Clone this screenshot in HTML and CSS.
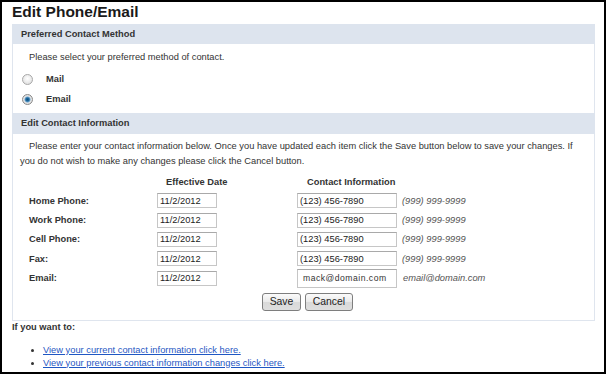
FILE: index.html
```html
<!DOCTYPE html>
<html lang="en">
<head>
    <meta charset="UTF-8">
    <meta name="viewport" content="width=device-width, initial-scale=1.0">
    <title>Edit Phone/Email</title>
    <link rel="stylesheet" href="styles.css">
</head>
<body>
<div class="frame">
    <h1>Edit Phone/Email</h1>

    <div class="panel">
        <div class="panel-head">Preferred Contact Method</div>
        <div class="panel-body method">
            <p class="intro">Please select your preferred method of contact.</p>
            <label class="choice"><input type="radio" name="method" value="mail"> Mail</label>
            <label class="choice"><input type="radio" name="method" value="email" checked> Email</label>
        </div>
        <div class="panel-head second">Edit Contact Information</div>
        <div class="panel-body info">
            <p class="para">Please enter your contact information below. Once you have updated each item click the Save button below to save your changes. If you do not wish to make any changes please click the Cancel button.</p>

            <div class="grid">
                <div></div>
                <div class="col-head date-head">Effective Date</div>
                <div class="col-head">Contact Information</div>
                <div></div>

                <label class="field-label">Home Phone:</label>
                <div><input class="date" type="text" value="11/2/2012"></div>
                <div><input class="contact" type="text" value="(123) 456-7890"></div>
                <div class="hint">(999) 999-9999</div>

                <label class="field-label">Work Phone:</label>
                <div><input class="date" type="text" value="11/2/2012"></div>
                <div><input class="contact" type="text" value="(123) 456-7890"></div>
                <div class="hint">(999) 999-9999</div>

                <label class="field-label">Cell Phone:</label>
                <div><input class="date" type="text" value="11/2/2012"></div>
                <div><input class="contact" type="text" value="(123) 456-7890"></div>
                <div class="hint">(999) 999-9999</div>

                <label class="field-label">Fax:</label>
                <div><input class="date" type="text" value="11/2/2012"></div>
                <div><input class="contact" type="text" value="(123) 456-7890"></div>
                <div class="hint">(999) 999-9999</div>

                <label class="field-label">Email:</label>
                <div><input class="date" type="text" value="11/2/2012"></div>
                <div><input class="contact email" type="text" value="mack@domain.com"></div>
                <div class="hint email-hint">email@domain.com</div>
            </div>

            <div class="actions">
                <button class="save">Save</button>
                <button class="cancel">Cancel</button>
            </div>
        </div>
    </div>

    <p class="want">If you want to:</p>
    <ul class="links">
        <li><a href="#">View your current contact information click here.</a></li>
        <li><a href="#">View your previous contact information changes click here.</a></li>
    </ul>
</div>
</body>
</html>
```

FILE: styles.css
```css
html, body {
    margin: 0;
    padding: 0;
    background: #fff;
}
body {
    font-family: "Liberation Sans", Arial, sans-serif;
    font-size: 9.3px;
    color: #333;
}
.frame {
    box-sizing: border-box;
    width: 606px;
    height: 374px;
    border: 2px solid #000;
    padding: 0 9px 0 10px;
    overflow: hidden;
}
h1 {
    margin: 0;
    font-size: 15.5px;
    line-height: 20px;
    color: #1a1a1a;
}
.panel {
    margin-top: 2px;
    border: 1px solid #dfe5ee;
    border-top: none;
}
.panel-head {
    background-color: #dde4ee;
    height: 20px;
    line-height: 20px;
    font-weight: bold;
    color: #333;
    margin: 0 -1px;
    padding-left: 9px;
}
.panel-head.second {
    height: 21px;
    line-height: 21px;
}
.method {
    padding: 6px 0 4px 0;
}
.intro {
    margin: 0 0 4px 0;
    line-height: 15px;
    padding-left: 16px;
}
.choice {
    display: flex;
    align-items: center;
    height: 20px;
    padding-left: 9px;
    font-weight: bold;
    gap: 13px;
}
.choice input {
    appearance: none;
    -webkit-appearance: none;
    margin: 0;
    width: 11px;
    height: 11px;
    border: 1px solid #a8a8a8;
    border-radius: 50%;
    background: radial-gradient(circle at 50% 40%, #ffffff 0, #f0f0f0 40%, #d6d6d6 100%);
    box-sizing: border-box;
}
.choice input:checked {
    border-color: #8a8a8a;
    background: radial-gradient(circle, #0d4f80 0, #1f6a9e 1.6px, #6fa6cf 2.6px, #e6e6e6 3.4px, #d2d2d2 100%);
}
.info {
    padding: 5px 4px 9px 7px;
}
.para {
    margin: 0;
    line-height: 15px;
    text-indent: 9px;
}
.grid {
    display: grid;
    grid-template-columns: 128px 140px 105px 1fr;
    grid-template-rows: 19px;
    grid-auto-rows: 19.4px;
    align-items: center;
    margin: 3px 0 0 9px;
}
.col-head {
    font-weight: bold;
    padding-left: 10px;
    white-space: nowrap;
}
.col-head.date-head {
    padding-left: 9px;
}
.field-label {
    font-weight: bold;
}
.grid > div {
    display: flex;
    align-items: center;
}
input[type="text"] {
    box-sizing: border-box;
    height: 15px;
    margin: 0;
    padding: 0 2px;
    border: 1px solid #c6c6c6;
    border-top-color: #a9a9a9;
    font-family: "Liberation Sans", Arial, sans-serif;
    font-size: 9.3px;
    color: #222;
    outline: none;
}
.date {
    width: 60px;
}
.contact {
    width: 100px;
}
.contact.email {
    height: 19px;
    padding-left: 5px;
    font-size: 8.6px;
    letter-spacing: 0.5px;
    color: #333;
}
.hint {
    font-style: italic;
    color: #555;
    white-space: nowrap;
}
.email-hint {
    padding-left: 1px;
}
.actions {
    display: flex;
    justify-content: center;
    gap: 4px;
    margin-top: 5px;
    padding-left: 5px;
}
button {
    box-sizing: border-box;
    height: 18px;
    padding: 0;
    border: 1px solid #7e7e7e;
    border-radius: 3px;
    background: linear-gradient(#fbfbfb, #e9e9e9 50%, #d9d9d9 51%, #dedede);
    font-family: "Liberation Sans", Arial, sans-serif;
    font-size: 10.4px;
    color: #222;
    cursor: pointer;
}
.save {
    width: 39px;
}
.cancel {
    width: 48px;
}
.want {
    margin: 0;
    line-height: 12px;
    font-weight: bold;
    color: #333;
}
.links {
    margin: 11px 0 0 0;
    padding-left: 31px;
    line-height: 12.6px;
}
.links a {
    color: #1f57c3;
    text-decoration: underline;
}
```
